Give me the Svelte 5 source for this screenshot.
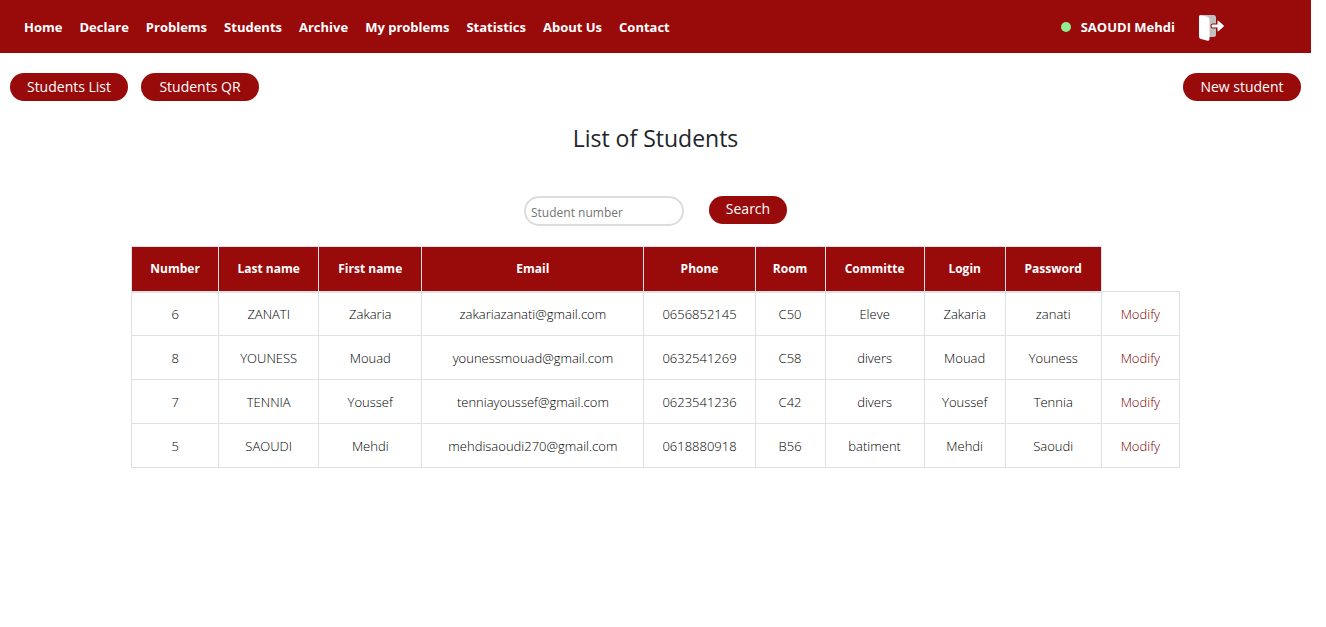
<script>
  const links = ['Home', 'Declare', 'Problems', 'Students', 'Archive', 'My problems', 'Statistics', 'About Us', 'Contact'];
  const columns = [
    { label: 'Number', width: 87 },
    { label: 'Last name', width: 100 },
    { label: 'First name', width: 103 },
    { label: 'Email', width: 222 },
    { label: 'Phone', width: 111 },
    { label: 'Room', width: 70 },
    { label: 'Committe', width: 99 },
    { label: 'Login', width: 81 },
    { label: 'Password', width: 96 },
    { label: '', width: 78 }
  ];
  const total = columns.reduce((sum, c) => sum + c.width, 0);
  const students = [
    ['6', 'ZANATI', 'Zakaria', 'zakariazanati@gmail.com', '0656852145', 'C50', 'Eleve', 'Zakaria', 'zanati'],
    ['8', 'YOUNESS', 'Mouad', 'younessmouad@gmail.com', '0632541269', 'C58', 'divers', 'Mouad', 'Youness'],
    ['7', 'TENNIA', 'Youssef', 'tenniayoussef@gmail.com', '0623541236', 'C42', 'divers', 'Youssef', 'Tennia'],
    ['5', 'SAOUDI', 'Mehdi', 'mehdisaoudi270@gmail.com', '0618880918', 'B56', 'batiment', 'Mehdi', 'Saoudi']
  ];
  let query = $state('');
</script>

<div class="page">
  <header>
    <nav>
      {#each links as link}
        <a href="#top">{link}</a>
      {/each}
    </nav>
    <div class="account">
      <span class="online"></span>
      <span class="user">SAOUDI Mehdi</span>
      <a class="logout" href="#logout" aria-label="Log out">
        <svg width="26" height="28" viewBox="0 -1 26 28">
          <path d="M2 1H14.500Q17 1 17 3.500V20.500Q17 23 14.500 23H9V4Z" fill="#c0c0c0" />
          <path d="M13.500 10.500H18.500V7.500Q18.500 6 19.700 7L24.500 11.200Q25.200 12 24.500 12.800L19.700 17Q18.500 18 18.500 16.500V13.500H13.500Q12.500 13.500 12.500 12T13.500 10.500Z" fill="#fff" stroke="#990a0a" stroke-width="2" paint-order="stroke" />
          <path d="M2 1L9 3Q10.500 3.500 10.500 5V25Q10.500 27.200 8.500 26.700L2 25Q0 24.500 0 22.500V2.500Q0 0.800 2 1Z" fill="#fff" />
        </svg>
      </a>
    </div>
  </header>

  <div class="actions">
    <button type="button">Students List</button>
    <button type="button">Students QR</button>
    <button type="button" class="new">New student</button>
  </div>

  <main>
    <h1>List of Students</h1>
    <form onsubmit={(e) => e.preventDefault()}>
      <input type="text" aria-label="Student number" placeholder="Student number" bind:value={query} />
      <button type="submit" class="search">Search</button>
    </form>

    <table>
      <colgroup>
        {#each columns as column}
          <col style="width: {(column.width / total) * 100}%" />
        {/each}
      </colgroup>
      <thead>
        <tr>
          {#each columns.slice(0, -1) as column}
            <th scope="col">{column.label}</th>
          {/each}
        </tr>
      </thead>
      <tbody>
        {#each students as student}
          <tr>
            {#each student as value}
              <td>{value}</td>
            {/each}
            <td><a href="#modify">Modify</a></td>
          </tr>
        {/each}
      </tbody>
    </table>
  </main>
</div>

<style>
  :global(body) {
    margin: 0;
    background: #fff;
  }
  .page {
    margin-right: 15px;
    color: #212529;
    font-family: 'Segoe UI', 'Open Sans', sans-serif;
    font-size: 13px;
  }
  a {
    color: inherit;
    text-decoration: none;
  }
  header {
    display: flex;
    align-items: center;
    justify-content: space-between;
    height: 53px;
    padding: 0 86px 0 24px;
    background: #990a0a;
    color: #fff;
    font-weight: 700;
  }
  nav {
    display: flex;
    gap: 17px;
  }
  .account {
    display: flex;
    align-items: center;
  }
  .online {
    width: 10px;
    height: 10px;
    margin-right: 10px;
    border-radius: 50%;
    background: #90ee90;
  }
  .user {
    margin-right: 24px;
  }
  .logout,
  svg {
    display: block;
  }
  .actions {
    display: flex;
    gap: 13px;
    padding: 20px 10px 0;
  }
  button {
    box-sizing: border-box;
    width: 118px;
    height: 28px;
    padding: 0;
    border: 0;
    border-radius: 14px;
    background: #990a0a;
    color: #fff;
    font-family: inherit;
    font-size: 14px;
    line-height: 28px;
    cursor: pointer;
  }
  .new {
    margin-left: auto;
  }
  h1 {
    margin: 21px 0 0;
    font-size: 23px;
    line-height: 32px;
    font-weight: 500;
    text-align: center;
  }
  form {
    display: flex;
    justify-content: center;
    gap: 25px;
    margin-top: 42px;
  }
  input {
    box-sizing: border-box;
    width: 160px;
    height: 30px;
    padding: 2px 5px 0;
    border: 2px solid #dcdcdc;
    border-radius: 15px;
    color: #212529;
    font-family: inherit;
    font-size: 12px;
  }
  input::placeholder {
    color: #757575;
  }
  .search {
    width: 78px;
    padding-bottom: 2px;
    line-height: 26px;
  }
  table {
    width: 80%;
    margin: 20px auto 0;
    table-layout: fixed;
    border-collapse: collapse;
    text-align: center;
  }
  th,
  td {
    box-sizing: border-box;
    height: 44px;
    padding: 0;
    border: 1px solid #dee2e6;
  }
  th {
    height: 45px;
    border-bottom-width: 2px;
    background: #990a0a;
    color: #fff;
    font-size: 12px;
    font-weight: 700;
  }
  td {
    color: #000;
    font-weight: 300;
  }
  td a {
    color: #7a0000;
  }
</style>
